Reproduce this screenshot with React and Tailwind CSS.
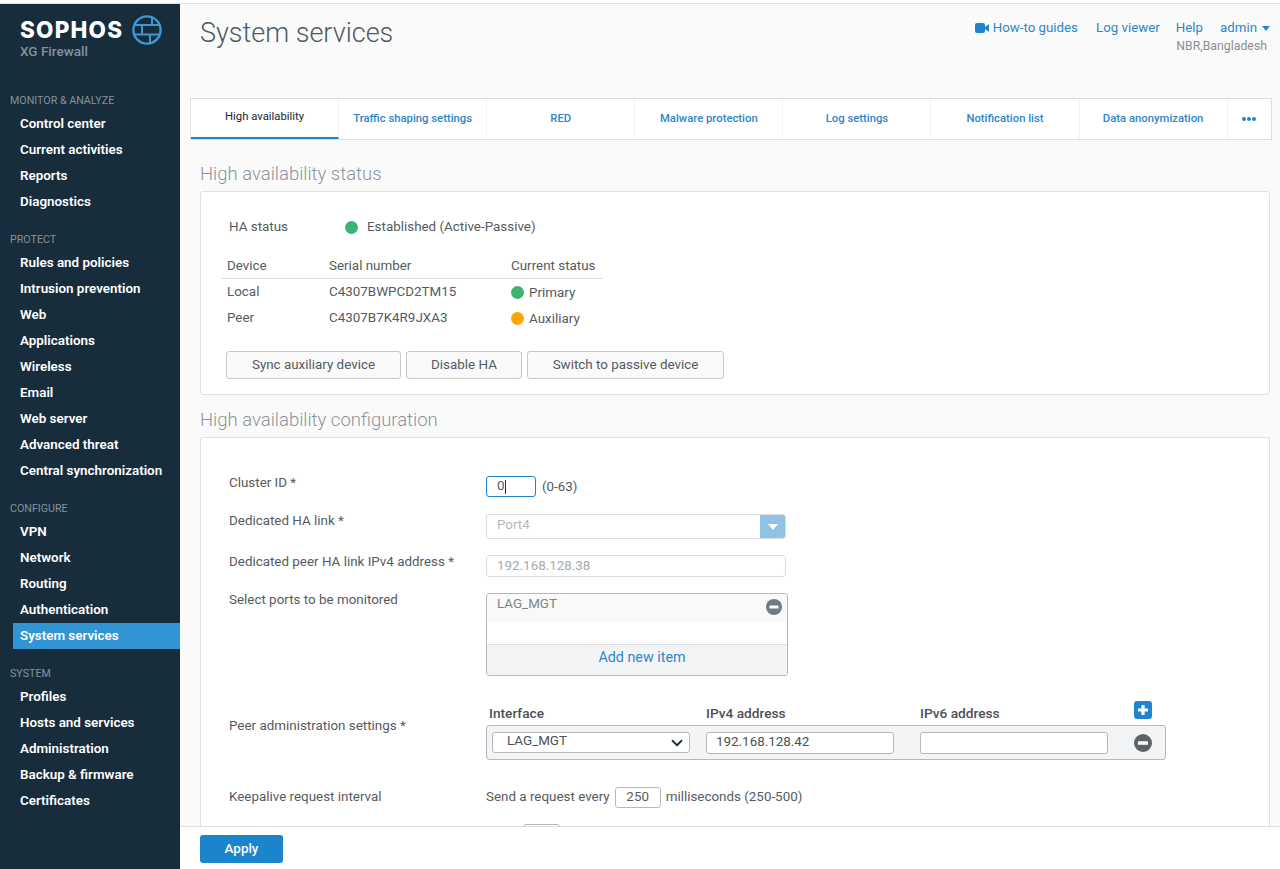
import React from "react";
import { ChevronDown } from "lucide-react";

const nav = [
  { label: "MONITOR & ANALYZE", items: ["Control center", "Current activities", "Reports", "Diagnostics"] },
  { label: "PROTECT", items: ["Rules and policies", "Intrusion prevention", "Web", "Applications", "Wireless", "Email", "Web server", "Advanced threat", "Central synchronization"] },
  { label: "CONFIGURE", items: ["VPN", "Network", "Routing", "Authentication", "System services"] },
  { label: "SYSTEM", items: ["Profiles", "Hosts and services", "Administration", "Backup & firmware", "Certificates"] },
];
const tabs = ["High availability", "Traffic shaping settings", "RED", "Malware protection", "Log settings", "Notification list", "Data anonymization"];

function Logo() {
  return (
    <div className="h-[86px] pl-5 pt-[11px]">
      <div className="flex items-center h-[30px]">
        <span className="w-[112px] text-[22.5px] font-extrabold text-white leading-none tracking-[1.2px] font-['Inter',sans-serif]">SOPHOS</span>
        <svg width="30" height="30" viewBox="0 0 30 30" fill="none" stroke="#3f97d3" strokeWidth="2">
          <circle cx="15" cy="15" r="13.6" strokeWidth="2.4" />
          <path d="M2 10H28M2 19.5H28M20 2V10M10 10V19.5M18 19.5V28" />
        </svg>
      </div>
      <div className="text-[13.5px] leading-none text-[#84929c] font-medium">XG Firewall</div>
    </div>
  );
}

function Sidebar() {
  return (
    <aside className="w-[180px] shrink-0 bg-[#172d3b] h-full overflow-hidden">
      <Logo />
      {nav.map((g) => (
        <div key={g.label} className="mb-[14px]">
          <div className="pl-[10px] pt-[2px] h-[21px] flex items-center text-[10.7px] text-[#84929c]">{g.label}</div>
          {g.items.map((it) => (
            <div
              key={it}
              className={`ml-[13px] pl-[7px] h-[26px] flex items-center text-[13.4px] font-semibold ${it === "System services" ? "bg-[#3295d3] text-white" : "text-white"}`}
            >
              {it}
            </div>
          ))}
        </div>
      ))}
    </aside>
  );
}

function Header() {
  return (
    <header className="h-[94px] flex justify-between pl-5 pr-[10px] shrink-0">
      <h1 className="text-[27px] leading-none pt-[16px] text-[#4f5a62] font-light">System services</h1>
      <div className="text-[13.3px] pt-[15px]">
        <div className="flex items-center h-[18px] text-[#2e86c8]">
          <svg width="14" height="10" viewBox="0 0 14 10" className="mr-[4px]" fill="#1f85cc">
            <rect x="0" y="0" width="10" height="10" rx="2" />
            <path d="M10 4L14 1V9L10 6Z" />
          </svg>
          <span>How-to guides</span>
          <span className="ml-[18px]">Log viewer</span>
          <span className="ml-[16px]">Help</span>
          <span className="ml-[17px]">admin</span>
          <svg width="8" height="5" viewBox="0 0 8 5" className="ml-[5px]" fill="#2e86c8"><path d="M0 0H8L4 5Z" /></svg>
        </div>
        <div className="text-right text-[12.3px] leading-[16px] text-[#8b8f96] pr-[3px] mt-[1px]">NBR,Bangladesh</div>
      </div>
    </header>
  );
}

function Tabs() {
  return (
    <div className="ml-[10px] mr-[8px] h-[42px] border border-[#dedede] bg-white flex shrink-0 text-[11.3px]">
      {tabs.map((t, i) => (
        <div
          key={t}
          className={`w-[148.1px] shrink-0 flex items-center justify-center border-r border-[#f3f3f3] ${i === 0 ? "border-b-2 border-b-[#1f85cc] text-[#1d2429] pb-[1px]" : "text-[#2e86c8] font-medium"}`}
        >
          {t}
        </div>
      ))}
      <div className="flex-1 flex items-center justify-center gap-[1px]">
        <span className="w-1 h-1 rounded-full bg-[#1f85cc]" />
        <span className="w-1 h-1 rounded-full bg-[#1f85cc]" />
        <span className="w-1 h-1 rounded-full bg-[#1f85cc]" />
      </div>
    </div>
  );
}

function Dot({ color }) {
  return <span className={`w-[13px] h-[13px] rounded-full inline-block shrink-0 ${color}`} />;
}

function Btn({ w, children }) {
  return (
    <div className={`${w} h-[28px] flex items-center justify-center rounded-[3px] border border-[#c9c9c9] bg-[#fafafa] text-[13.4px] text-[#555b60]`}>
      {children}
    </div>
  );
}

function Status() {
  return (
    <section className="ml-5 mr-[10px] h-[204px] border border-[#e0e0e0] rounded-[3px] bg-white text-[13.4px] text-[#555b60] shrink-0">
      <div className="flex items-center pl-[28px] pt-[26px] h-[44px]">
        <span className="w-[116px]">HA status</span>
        <Dot color="bg-[#3cb371]" />
        <span className="ml-[9px] pt-[1px]">Established (Active-Passive)</span>
      </div>
      <div className="mt-[19px] ml-[20px] w-[382px]">
        <div className="h-[24px] flex items-center border-b border-[#dedede] pl-[6px]">
          <span className="w-[102px]">Device</span>
          <span className="w-[182px]">Serial number</span>
          <span>Current status</span>
        </div>
        <div className="h-[26px] flex items-center pl-[6px]">
          <span className="w-[102px]">Local</span>
          <span className="w-[182px]">C4307BWPCD2TM15</span>
          <Dot color="bg-[#3cb371]" />
          <span className="ml-[5px] pt-[2px]">Primary</span>
        </div>
        <div className="h-[26px] flex items-center pl-[6px]">
          <span className="w-[102px]">Peer</span>
          <span className="w-[182px]">C4307B7K4R9JXA3</span>
          <Dot color="bg-[#ffa500]" />
          <span className="ml-[5px] pt-[2px]">Auxiliary</span>
        </div>
      </div>
      <div className="flex gap-[5px] ml-[25px] mt-[20px]">
        <Btn w="w-[175px]">Sync auxiliary device</Btn>
        <Btn w="w-[116px]">Disable HA</Btn>
        <Btn w="w-[197px]">Switch to passive device</Btn>
      </div>
    </section>
  );
}

function Row({ label, labelClass, h, children, mt }) {
  return (
    <div className={`flex ${h} ${mt}`}>
      <div className={`w-[257px] shrink-0 ${labelClass}`}>{label}</div>
      <div className="flex-1 min-w-0">{children}</div>
    </div>
  );
}

function MinusIcon({ size, fill }) {
  return (
    <svg width={size} height={size} viewBox="0 0 16 16">
      <circle cx="8" cy="8" r="8" fill={fill} />
      <rect x="3.5" y="6.5" width="9" height="3" rx="0.5" fill="#fff" />
    </svg>
  );
}

function Config() {
  return (
    <section className="ml-5 mr-[10px] flex-1 border border-b-0 border-[#e0e0e0] rounded-t-[3px] bg-white text-[13.4px] text-[#555b60] pl-[28px] pt-[38px] overflow-hidden min-h-0">
      <Row label="Cluster ID *" labelClass="-mt-[3px]" h="h-[21px]">
        <div className="flex items-center h-full">
          <div className="w-[50px] h-[21px] border border-[#1f85cc] rounded-[3px] pl-[10px] flex items-center text-[#555b60]">
            0<span className="w-[1px] h-[14px] bg-[#1d2f3c]" />
          </div>
          <span className="ml-[6px] mt-[1px]">(0-63)</span>
        </div>
      </Row>
      <Row label="Dedicated HA link *" labelClass="-mt-[3px]" h="h-[25px]" mt="mt-[17px]">
        <div className="w-[300px] h-[25px] flex border border-[#dedede] rounded-[3px] overflow-hidden pl-[10px] pb-[3px] items-center text-[#b4b8bb] relative">
          Port4
          <div className="absolute right-0 top-0 bottom-0 w-[25px] bg-[#90c2e6] flex items-center justify-center">
            <svg width="10" height="6" viewBox="0 0 10 6" fill="#fff"><path d="M0 0H10L5 6Z" /></svg>
          </div>
        </div>
      </Row>
      <Row label="Dedicated peer HA link IPv4 address *" labelClass="-mt-[3px]" h="h-[22px]" mt="mt-[16px]">
        <div className="w-[300px] h-[22px] border border-[#dedede] rounded-[3px] pl-[10px] flex items-center text-[#a5abb0]">192.168.128.38</div>
      </Row>
      <Row label="Select ports to be monitored" labelClass="-mt-[3px]" h="h-[83px]" mt="mt-[16px]">
        <div className="w-[302px] h-[83px] border border-[#b3b9bf] rounded-[3px] flex flex-col overflow-hidden">
          <div className="h-[28px] bg-[#f9f9f9] pl-[10px] flex text-[#7d8489] justify-between pr-[5px]">
            <span>LAG_MGT</span>
            <span className="mt-[5px]"><MinusIcon size={16} fill="#6f7a82" /></span>
          </div>
          <div className="h-[23px] bg-white border-b border-[#dedede]" />
          <div className="flex-1 bg-[#f3f4f6] flex items-center justify-center text-[#2e86c8] text-[14.3px] pb-[5px] pl-[10px]">Add new item</div>
        </div>
      </Row>
      <Row label="Peer administration settings *" labelClass="pt-[11px]" h="h-[55px]" mt="mt-[29px]">
        <div className="w-[680px] relative">
          <div className="flex h-[20px] text-[13.7px] text-[#4a5157] font-medium pl-[3px] items-center pb-[4px]">
            <span className="w-[217px]">Interface</span>
            <span className="w-[214px]">IPv4 address</span>
            <span>IPv6 address</span>
          </div>
          <svg width="18" height="18" viewBox="0 0 18 18" className="absolute left-[648px] top-[-4px]">
            <rect width="18" height="18" rx="3" fill="#1f85cc" />
            <path d="M9 4V14M4 9H14" stroke="#fff" strokeWidth="3.2" />
          </svg>
          <div className="h-[35px] border border-[#b3b9bf] rounded-[3px] bg-[#f3f4f6] flex items-center pl-[5px]">
            <div className="w-[198px] h-[21px] border border-[#b3b9bf] rounded-[3px] bg-white flex items-center justify-between pl-[14px] pr-[3px] pb-[2px] text-[#4a5157]">
              LAG_MGT
              <ChevronDown size={18} strokeWidth={2.4} className="text-[#1d2f3c] mt-[2px]" />
            </div>
            <div className="w-[188px] h-[22px] ml-[16px] border border-[#b3b9bf] rounded-[3px] bg-white flex items-center pl-[9px] text-[#4a5157]">192.168.128.42</div>
            <div className="w-[188px] h-[22px] ml-[26px] border border-[#b3b9bf] rounded-[3px] bg-white" />
            <span className="ml-[26px]"><MinusIcon size={18} fill="#5c6368" /></span>
          </div>
        </div>
      </Row>
      <Row label="Keepalive request interval" labelClass="pt-0" h="h-[21px]" mt="mt-[27px]">
        <div className="flex items-center h-full">
          <span>Send a request every</span>
          <div className="w-[46px] h-[21px] ml-[5px] border border-[#b3b9bf] rounded-[3px] flex items-center justify-center">250</div>
          <span className="ml-[5px]">milliseconds (250-500)</span>
        </div>
      </Row>
      <div className="mt-[16px] ml-[294px] w-[37px] h-[21px] border border-[#b3b9bf] rounded-[3px]" />
    </section>
  );
}

function SectionTitle({ children, h }) {
  return <h2 className={`ml-5 ${h} text-[18.5px] leading-[20px] font-light text-[#8b949b] flex items-end pb-[7px] shrink-0`}>{children}</h2>;
}

export default function App() {
  return (
    <div className="w-[1280px] h-[869px] overflow-hidden flex flex-col bg-white font-['Roboto',sans-serif]">
      <div className="h-[4px] shrink-0 bg-white border-b border-[#e0e0e0]" />
      <div className="flex-1 flex min-h-0">
        <Sidebar />
        <main className="flex-1 min-w-0 flex flex-col bg-[#fafafa] min-h-0">
          <Header />
          <Tabs />
          <SectionTitle h="h-[51px]">High availability status</SectionTitle>
          <Status />
          <SectionTitle h="h-[42px]">High availability configuration</SectionTitle>
          <Config />
          <footer className="h-[43px] shrink-0 border-t border-[#e0e0e0] bg-white pl-5 pt-[8px]">
            <div className="w-[83px] h-[28px] rounded-[3px] bg-[#1a85cc] text-white text-[13.4px] font-medium flex items-center justify-center">Apply</div>
          </footer>
        </main>
      </div>
    </div>
  );
}
